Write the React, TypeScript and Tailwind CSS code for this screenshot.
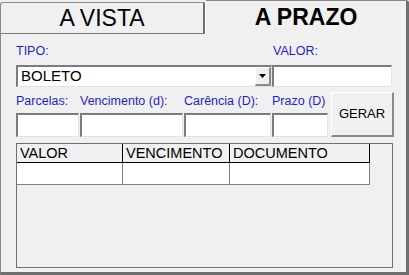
import React from "react";

const sunken =
  "border-t-2 border-l-2 border-b border-r border-t-[#7c7c7c] border-l-[#7c7c7c] border-b-[#e3e3e3] border-r-[#e3e3e3] bg-white";

const raised =
  "border-t border-l border-b-2 border-r-2 border-t-white border-l-white border-b-[#8a8a8a] border-r-[#8a8a8a] bg-[#f0f0f0]";

const labelCls = "text-[12.5px] leading-[14px] text-[#1f1fcc] whitespace-nowrap";

type Field = { label: string; width: number };

const fields: Field[] = [
  { label: "Parcelas:", width: 64 },
  { label: "Vencimento (d):", width: 104 },
  { label: "Carência (D):", width: 88 },
  { label: "Prazo (D)", width: 57 },
];

const columns = [
  { title: "VALOR", width: 106 },
  { title: "VENCIMENTO", width: 107 },
  { title: "DOCUMENTO", width: 140 },
];

export default function App() {
  return (
    <div className="flex h-[275px] w-[409px] flex-col overflow-hidden bg-[#f0f0f0] font-['Liberation_Sans',Arial,sans-serif] text-black">
      {/* tabs */}
      <div className="flex h-[34px] shrink-0">
        <div className="mt-[2px] flex h-[32px] w-[205px] items-center justify-center rounded-tl-[3px] border-t border-l border-b border-r-2 border-t-[#8a8a8a] border-l-[#8a8a8a] border-b-[#7a7a7a] border-r-[#6f6f6f] text-[23px] leading-none">
          A VISTA
        </div>
        <div className="flex h-[34px] w-[204px] items-center justify-center rounded-tr-[3px] border-t border-l border-r-[3px] border-t-[#8a8a8a] border-l-white border-r-[#6f6f6f] pb-[1px] text-[23px] font-bold leading-none">
          A PRAZO
        </div>
      </div>

      {/* panel */}
      <div className="flex w-[409px] flex-1 flex-col border-l border-b-[3px] border-r-[3px] border-l-[#8a8a8a] border-b-[#6f6f6f] border-r-[#6f6f6f] pl-[15px] pt-[10px]">
        <div className="flex">
          <div className="flex w-[256px] flex-col gap-[7px]">
            <span className={labelCls}>TIPO:</span>
            <div className={`flex h-[22px] items-stretch ${sunken}`}>
              <span className="flex-1 pl-[3px] text-[15px] leading-[18px]">BOLETO</span>
              <span className={`flex w-[16px] items-center justify-center ${raised}`}>
                <svg width="7" height="4" viewBox="0 0 7 4">
                  <path d="M0 0h7L3.5 4z" fill="#000" />
                </svg>
              </span>
            </div>
          </div>
          <div className="flex w-[120px] flex-col gap-[7px]">
            <span className={`${labelCls} pl-[1px]`}>VALOR:</span>
            <div className={`h-[22px] ${sunken}`} />
          </div>
        </div>

        <div className="mt-[5px] flex">
          {fields.map((f) => (
            <div key={f.label} className="flex flex-col pt-[2px]" style={{ width: f.width }}>
              <span className={labelCls}>{f.label}</span>
              <div className={`mt-[5px] h-[24px] ${sunken}`} style={{ width: f.width - 1 }} />
            </div>
          ))}
          <button className={`ml-[2px] h-[45px] w-[63px] text-[13px] ${raised}`}>GERAR</button>
        </div>

        {/* grid */}
        <div className="mt-[6px] h-[125px] w-[377px] border border-[#707070]">
          <div className="flex">
            {columns.map((c) => (
              <div
                key={c.title}
                className="flex h-[19px] items-center border-b border-r border-black pl-[3px] text-[14.5px] leading-none"
                style={{ width: c.width }}
              >
                {c.title}
              </div>
            ))}
          </div>
          <div className="flex">
            {columns.map((c) => (
              <div
                key={c.title}
                className="h-[22px] border-b border-r border-[#808080] bg-white"
                style={{ width: c.width }}
              />
            ))}
          </div>
        </div>
      </div>
    </div>
  );
}
